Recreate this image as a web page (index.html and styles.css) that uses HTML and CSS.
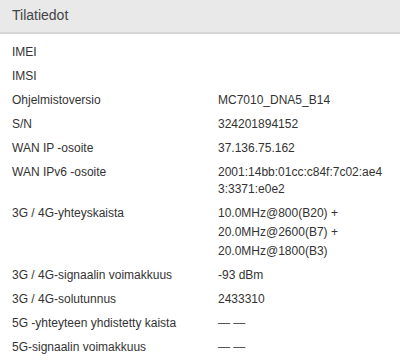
FILE: index.html
```html
<!DOCTYPE html>
<html lang="fi">
<head>
  <meta charset="UTF-8">
  <title>Tilatiedot</title>
  <link rel="stylesheet" href="styles.css">
</head>
<body>

<div class="panel">
  <div class="panel-head">Tilatiedot</div>
  <div class="info-list">
    <div class="info-row"><div class="label">IMEI</div><div class="value"></div></div>
    <div class="info-row"><div class="label">IMSI</div><div class="value"></div></div>
    <div class="info-row"><div class="label">Ohjelmistoversio</div><div class="value">MC7010_DNA5_B14</div></div>
    <div class="info-row"><div class="label">S/N</div><div class="value">324201894152</div></div>
    <div class="info-row"><div class="label">WAN IP -osoite</div><div class="value">37.136.75.162</div></div>
    <div class="info-row"><div class="label">WAN IPv6 -osoite</div><div class="value">2001:14bb:01cc:c84f:7c02:ae43:3371:e0e2</div></div>
    <div class="info-row">
      <div class="label">3G / 4G-yhteyskaista</div>
      <div class="value">
        <div class="band">10.0MHz@800(B20) +</div>
        <div class="band">20.0MHz@2600(B7) +</div>
        <div class="band">20.0MHz@1800(B3)</div>
      </div>
    </div>
    <div class="info-row"><div class="label">3G / 4G-signaalin voimakkuus</div><div class="value">-93 dBm</div></div>
    <div class="info-row"><div class="label">3G / 4G-solutunnus</div><div class="value">2433310</div></div>
    <div class="info-row"><div class="label">5G -yhteyteen yhdistetty kaista</div><div class="value empty">— —</div></div>
    <div class="info-row"><div class="label">5G-signaalin voimakkuus</div><div class="value empty">— —</div></div>
  </div>
</div>

</body>
</html>
```

FILE: styles.css
```css
html, body {
  margin: 0;
  padding: 0;
  background: #fff;
  overflow: hidden;
}

.panel {
  font-family: 'Liberation Sans', Arial, sans-serif;
  color: #333;
}

.panel-head {
  height: 32px;
  line-height: 31px;
  padding: 0 12px;
  font-size: 14px;
  color: #444;
  background: #e9e9e9;
  border-bottom: 2px solid #d6d6d6;
}

.info-list {
  padding-top: 6px;
  font-size: 12px;
  line-height: 17px;
}

.info-row {
  display: grid;
  grid-template-columns: 206px 1fr;
  padding: 4px 12px 3px;
}

.value {
  word-break: break-all;
  padding-right: 4px;
}

.band + .band {
  margin-top: 2px;
}

.value.empty {
  color: #555;
}
```
